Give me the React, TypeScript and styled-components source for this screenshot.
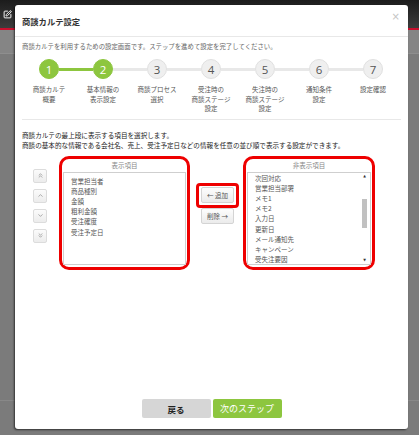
import { styled, createGlobalStyle } from 'styled-components'
import { ChevronsUp, ChevronUp, ChevronDown, ChevronsDown, SquarePen } from 'lucide-react'

const GlobalStyle = createGlobalStyle`
  html, body {
    margin: 0;
    padding: 0;
    background: #7b7b7b;
    font-family: "Noto Sans CJK JP", "Noto Sans", sans-serif;
  }
  * { box-sizing: border-box; }
`

const steps = [
  ['商談カルテ', '概要'],
  ['基本情報の', '表示設定'],
  ['商談プロセス', '選択'],
  ['受注時の', '商談ステージ', '設定'],
  ['失注時の', '商談ステージ', '設定'],
  ['通知条件', '設定'],
  ['設定確認'],
]
const current = 2

const shownItems = ['営業担当者', '商品種別', '金額', '粗利金額', '受注確度', '受注予定日']
const hiddenItems = [
  '次回対応',
  '営業担当部署',
  'メモ1',
  'メモ2',
  '入力日',
  '更新日',
  'メール通知先',
  'キャンペーン',
  '受失注要因',
]

function App() {
  return (
    <>
      <GlobalStyle />
      <Page>
        <Topbar>
          <SquarePen size={9} color="#fff" strokeWidth={2.5} />
        </Topbar>
        <SubBar />
        <Backdrop />
      </Page>

      <Modal>
        <Header>
          <Title>商談カルテ設定</Title>
          <Close>×</Close>
        </Header>

        <Body>
          <Lead>商談カルテを利用するための設定画面です。ステップを進めて設定を完了してください。</Lead>

          <Steps>
            {steps.map((label, i) => {
              const n = i + 1
              return (
                <Step key={n}>
                  <Track>
                    <Half $hidden={n === 1} $done={n <= current} />
                    <Circle $done={n <= current}>{n}</Circle>
                    <Half $hidden={n === steps.length} $done={n < current} />
                  </Track>
                  <StepLabel>
                    {label.map((l) => (
                      <div key={l}>{l}</div>
                    ))}
                  </StepLabel>
                </Step>
              )
            })}
          </Steps>

          <Divider />

          <Instructions>
            <div>商談カルテの最上段に表示する項目を選択します。</div>
            <div>商談の基本的な情報である会社名、売上、受注予定日などの情報を任意の並び順で表示する設定ができます。</div>
          </Instructions>

          <Editor>
            <OrderColumn>
              <OrderButton><ChevronsUp size={7} /></OrderButton>
              <OrderButton><ChevronUp size={7} /></OrderButton>
              <OrderButton><ChevronDown size={7} /></OrderButton>
              <OrderButton><ChevronsDown size={7} /></OrderButton>
            </OrderColumn>

            <Highlight $width={131}>
              <ListTitle>表示項目</ListTitle>
              <ListBox>
                <Items $pad={3}>
                  {shownItems.map((t) => (
                    <Item key={t}>{t}</Item>
                  ))}
                </Items>
              </ListBox>
            </Highlight>

            <MoveColumn>
              <AddFrame>
                <MoveButton>← 追加</MoveButton>
              </AddFrame>
              <MoveButton>削除 →</MoveButton>
            </MoveColumn>

            <Highlight $width={132}>
              <ListTitle>非表示項目</ListTitle>
              <ListBox>
                <Items $pad={0}>
                  {hiddenItems.map((t) => (
                    <Item key={t}>{t}</Item>
                  ))}
                </Items>
                <Scrollbar>
                  <ScrollArrow>▲</ScrollArrow>
                  <ScrollTrack>
                    <ScrollThumb />
                  </ScrollTrack>
                  <ScrollArrow>▼</ScrollArrow>
                </Scrollbar>
              </ListBox>
            </Highlight>
          </Editor>
        </Body>

        <Footer>
          <FooterButton $primary={false}>戻る</FooterButton>
          <FooterButton $primary>次のステップ</FooterButton>
        </Footer>
      </Modal>
    </>
  )
}

const Page = styled.div`
  height: 435px;
  display: flex;
  flex-direction: column;
  overflow: hidden;
`

const Topbar = styled.div`
  height: 30px;
  background: linear-gradient(#1c1c1c, #3c3c3c);
  border-bottom: 2px solid #c8102e;
  display: flex;
  align-items: center;
  padding-left: 3px;
`

const SubBar = styled.div`
  height: 24px;
  background: #858585;
  border-bottom: 1px solid #8e8e8e;
`

const Backdrop = styled.div`
  flex: 1;
  background: #7b7b7b;
  border-bottom: 1px solid #888;
  max-height: 347px;
`

const Modal = styled.div`
  position: absolute;
  left: 15px;
  top: 5px;
  width: 393px;
  height: 424px;
  background: #fff;
  border-radius: 3px;
  box-shadow: -1px 1px 2px rgba(0, 0, 0, 0.6);
  display: flex;
  flex-direction: column;
`

const Header = styled.div`
  height: 32px;
  border-bottom: 1px solid #e8e8e8;
  display: flex;
  align-items: center;
  justify-content: space-between;
  padding: 0 7px;
`

const Title = styled.h1`
  margin: 0;
  font-size: 8.3px;
  font-weight: 700;
  color: #333;
`

const Close = styled.span`
  font-family: "DejaVu Sans", sans-serif;
  font-size: 10px;
  color: #c4c4c4;
  margin-top: -9px;
  margin-right: 1px;
`

const Body = styled.div`
  padding: 0 7px;
`

const Lead = styled.p`
  margin: 5px 0 0;
  font-size: 6.4px;
  line-height: 10px;
  color: #666;
`

const Steps = styled.div`
  display: flex;
  margin-top: 7px;
`

const Step = styled.div`
  width: 54px;
  display: flex;
  flex-direction: column;
  align-items: stretch;
`

const Track = styled.div`
  display: flex;
  align-items: center;
  height: 20px;
`

const Half = styled.div<{ $hidden: boolean; $done: boolean }>`
  flex: 1;
  height: 3px;
  background: ${({ $hidden, $done }) => ($hidden ? 'transparent' : $done ? '#8dc63f' : '#e8e8e8')};
`

const Circle = styled.div<{ $done: boolean }>`
  width: 20px;
  height: 20px;
  border-radius: 50%;
  display: flex;
  align-items: center;
  justify-content: center;
  font-family: "Open Sans", sans-serif;
  font-size: 11.5px;
  color: ${({ $done }) => ($done ? '#fff' : '#555')};
  background: ${({ $done }) => ($done ? '#8dc63f' : '#efefef')};
  border: 1px solid ${({ $done }) => ($done ? '#8dc63f' : '#e0e0e0')};
`

const StepLabel = styled.div`
  margin-top: 6px;
  text-align: center;
  font-size: 6.5px;
  line-height: 9.5px;
  color: #555;
  white-space: nowrap;
`

const Divider = styled.hr`
  margin: 5px 0 0;
  border: 0;
  border-top: 1.5px solid #e8e8e8;
`

const Instructions = styled.div`
  margin-top: 10px;
  font-size: 6.6px;
  line-height: 10px;
  color: #222;
`

const Editor = styled.div`
  display: flex;
  align-items: flex-start;
  margin-top: 6px;
  padding-left: 11px;
`

const OrderColumn = styled.div`
  display: flex;
  flex-direction: column;
  gap: 6px;
  margin-top: 13px;
  margin-right: 12px;
`

const OrderButton = styled.button`
  width: 14px;
  height: 14px;
  padding: 0;
  border: 1px solid #dcdcdc;
  border-radius: 2px;
  background: linear-gradient(#fbfbfb, #ececec);
  color: #777;
  display: flex;
  align-items: center;
  justify-content: center;
`

const Highlight = styled.div<{ $width: number }>`
  width: ${({ $width }) => $width}px;
  height: 114px;
  border: 3px solid #ee0000;
  border-radius: 10px;
  padding: 0 1px 2px;
  display: flex;
  flex-direction: column;
`

const ListTitle = styled.div`
  height: 13px;
  font-size: 6.5px;
  line-height: 13px;
  text-align: center;
  color: #888;
`

const ListBox = styled.div`
  flex: 1;
  border: 1px solid #cfcfcf;
  background: #fff;
  display: flex;
  overflow: hidden;
`

const Items = styled.div<{ $pad: number }>`
  flex: 1;
  padding: ${({ $pad }) => $pad}px 0 0 7px;
  overflow: hidden;
`

const Item = styled.div`
  font-size: 6.5px;
  line-height: 10.2px;
  color: #555;
  white-space: nowrap;
`

const Scrollbar = styled.div`
  width: 7px;
  margin-right: 2px;
  display: flex;
  flex-direction: column;
  align-items: center;
`

const ScrollArrow = styled.div`
  height: 7px;
  font-family: "DejaVu Sans", sans-serif;
  font-size: 3.5px;
  line-height: 7px;
  color: #333;
`

const ScrollTrack = styled.div`
  flex: 1;
  width: 100%;
  padding-top: 19px;
`

const ScrollThumb = styled.div`
  width: 5px;
  height: 29px;
  margin: 0 auto;
  background: #c1c1c1;
`

const MoveColumn = styled.div`
  width: 43px;
  margin: 27px 4px 0 6px;
  display: flex;
  flex-direction: column;
  align-items: center;
  gap: 0;
`

const AddFrame = styled.div`
  width: 43px;
  height: 25px;
  border: 3px solid #ee0000;
  border-radius: 4px;
  display: flex;
  align-items: center;
  justify-content: center;
  margin-bottom: 0;
`

const MoveButton = styled.button`
  width: 33px;
  height: 16px;
  padding: 0;
  border: 1px solid #d4d4d4;
  border-radius: 2px;
  background: linear-gradient(#fdfdfd, #ebebeb);
  font-family: "Noto Sans CJK JP", sans-serif;
  font-size: 6.5px;
  color: #555;
  white-space: nowrap;
`

const Footer = styled.div`
  margin-top: auto;
  padding-bottom: 11px;
  display: flex;
  justify-content: center;
  gap: 2px;
`

const FooterButton = styled.button<{ $primary: boolean }>`
  width: 69px;
  height: 19px;
  padding: 0;
  border: 0;
  border-radius: 2px;
  background: ${({ $primary }) => ($primary ? '#8dc63f' : '#d6d6d6')};
  color: ${({ $primary }) => ($primary ? '#fff' : '#222')};
  font-family: "Noto Sans CJK JP", sans-serif;
  font-size: ${({ $primary }) => ($primary ? '9px' : '8.5px')};
  font-weight: ${({ $primary }) => ($primary ? 400 : 700)};
`

export default App
